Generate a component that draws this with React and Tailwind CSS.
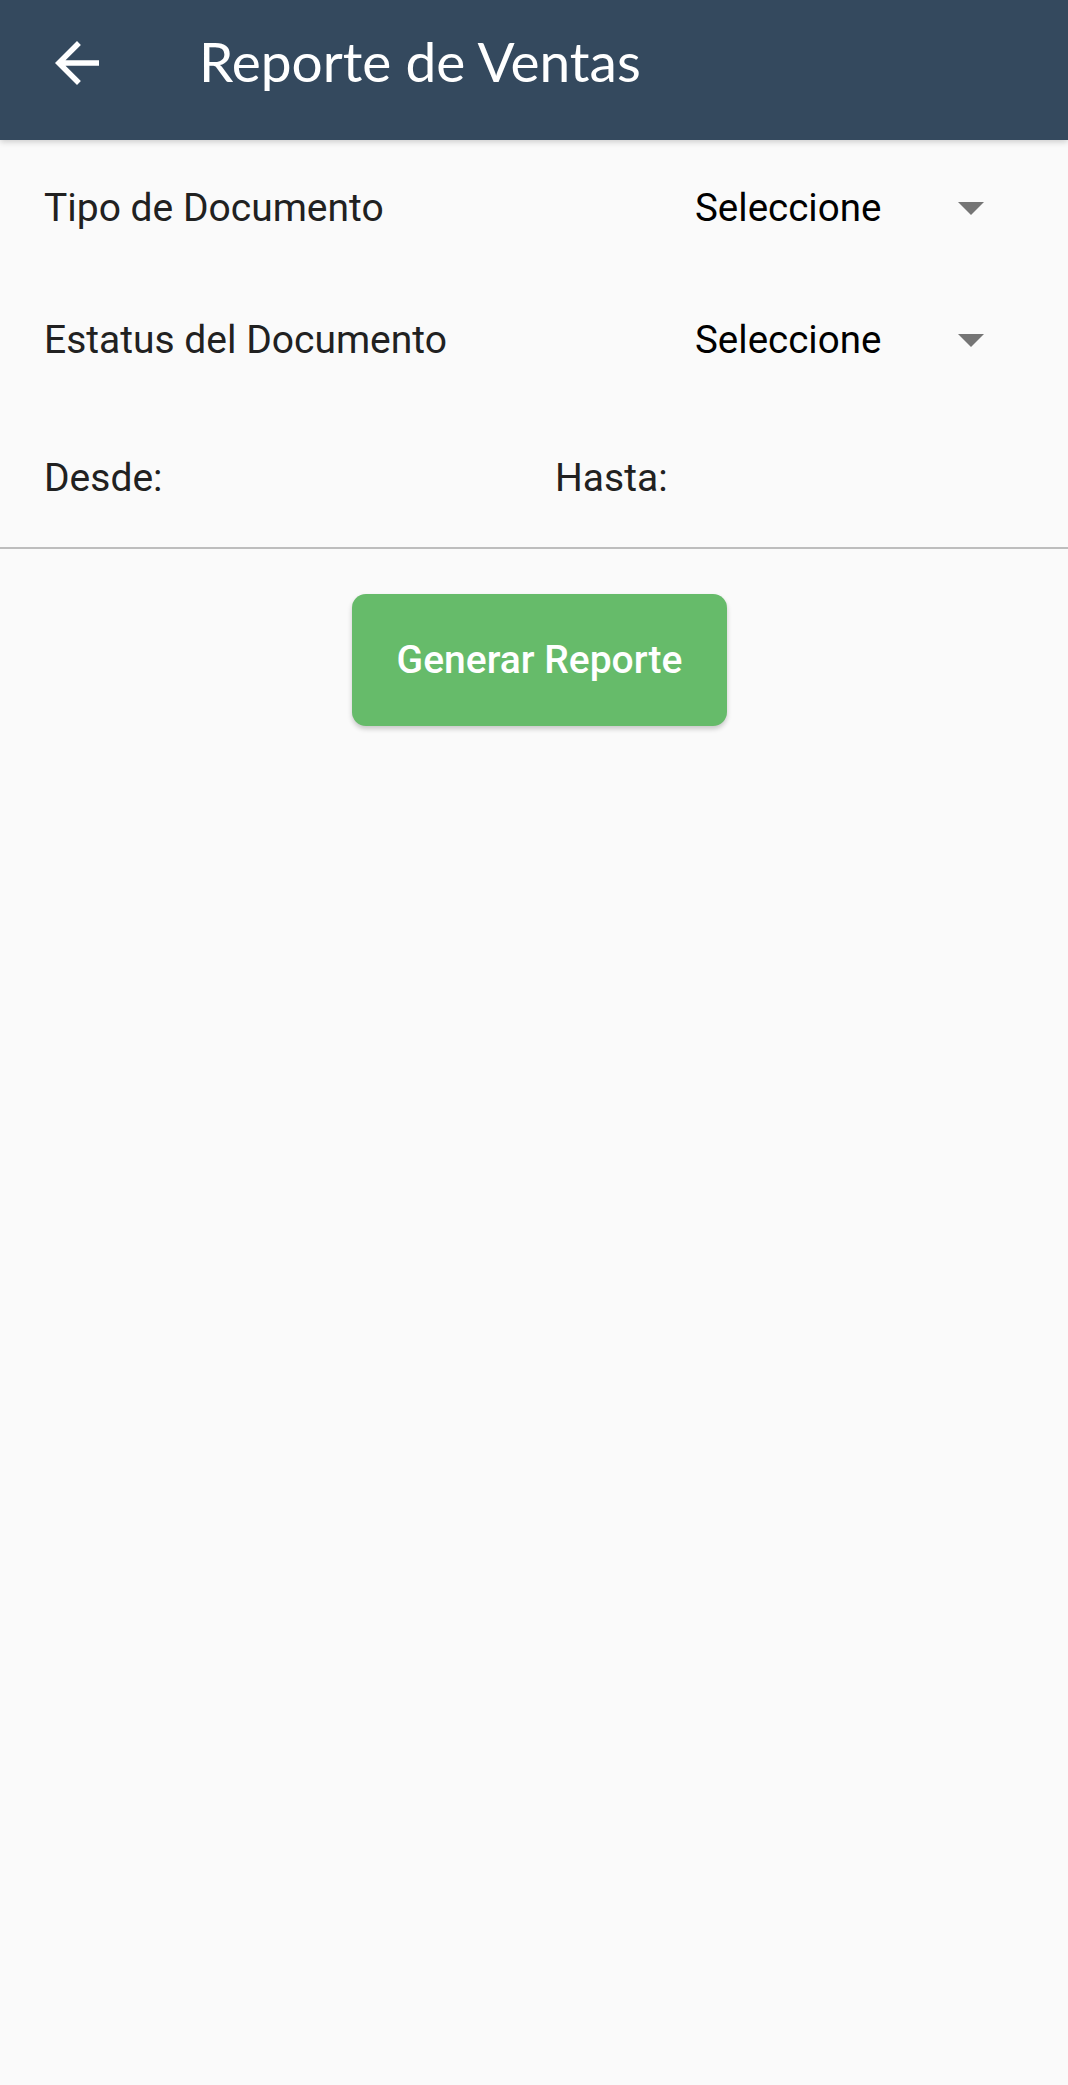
import React from "react";

function Row({ label, h }) {
  return (
    <div className={`flex ${h} items-center justify-between pl-[44px] pr-[84px]`}>
      <span className="text-[39px] text-[#212121]">{label}</span>
      <div className="flex w-[289px] items-center justify-between">
        <span className="text-[38.5px] text-black">Seleccione</span>
        <span className="block h-0 w-0 border-l-[13px] border-r-[13px] border-t-[13px] border-l-transparent border-r-transparent border-t-[#757575]" />
      </div>
    </div>
  );
}

export default function App() {
  return (
    <div className="min-h-[2085px] bg-[#fafafa]" style={{ fontFamily: "Roboto, 'Noto Sans', sans-serif" }}>
      <header className="relative z-10 flex h-[140px] items-center bg-[#34495e] pb-[14px] shadow-[0_2px_6px_rgba(0,0,0,0.18)]">
        <svg className="ml-[44px] h-[66px] w-[66px] shrink-0" viewBox="0 0 24 24" fill="#ffffff">
          <path d="M20 11H7.83l5.59-5.59L12 4l-8 8 8 8 1.41-1.41L7.83 13H20v-2z" />
        </svg>
        <h1 className="-mt-[3px] ml-[89px] text-[55px] text-white" style={{ fontFamily: "Lato, 'Open Sans', sans-serif" }}>
          Reporte de Ventas
        </h1>
      </header>
      <Row label="Tipo de Documento" h="h-[136px]" />
      <Row label="Estatus del Documento" h="h-[128px]" />
      <div className="flex h-[145px] items-center border-b-2 border-[#bdbdbd] pl-[44px] pt-[5px]">
        <span className="w-[511px] text-[39px] text-[#212121]">Desde:</span>
        <span className="text-[39px] text-[#212121]">Hasta:</span>
      </div>
      <div className="flex justify-center pt-[45px]">
        <button className="ml-[11px] h-[132px] w-[375px] rounded-[14px] bg-[#66bb6a] text-[39px] font-medium text-white shadow-[0_3px_5px_rgba(0,0,0,0.2)]">
          Generar Reporte
        </button>
      </div>
    </div>
  );
}
